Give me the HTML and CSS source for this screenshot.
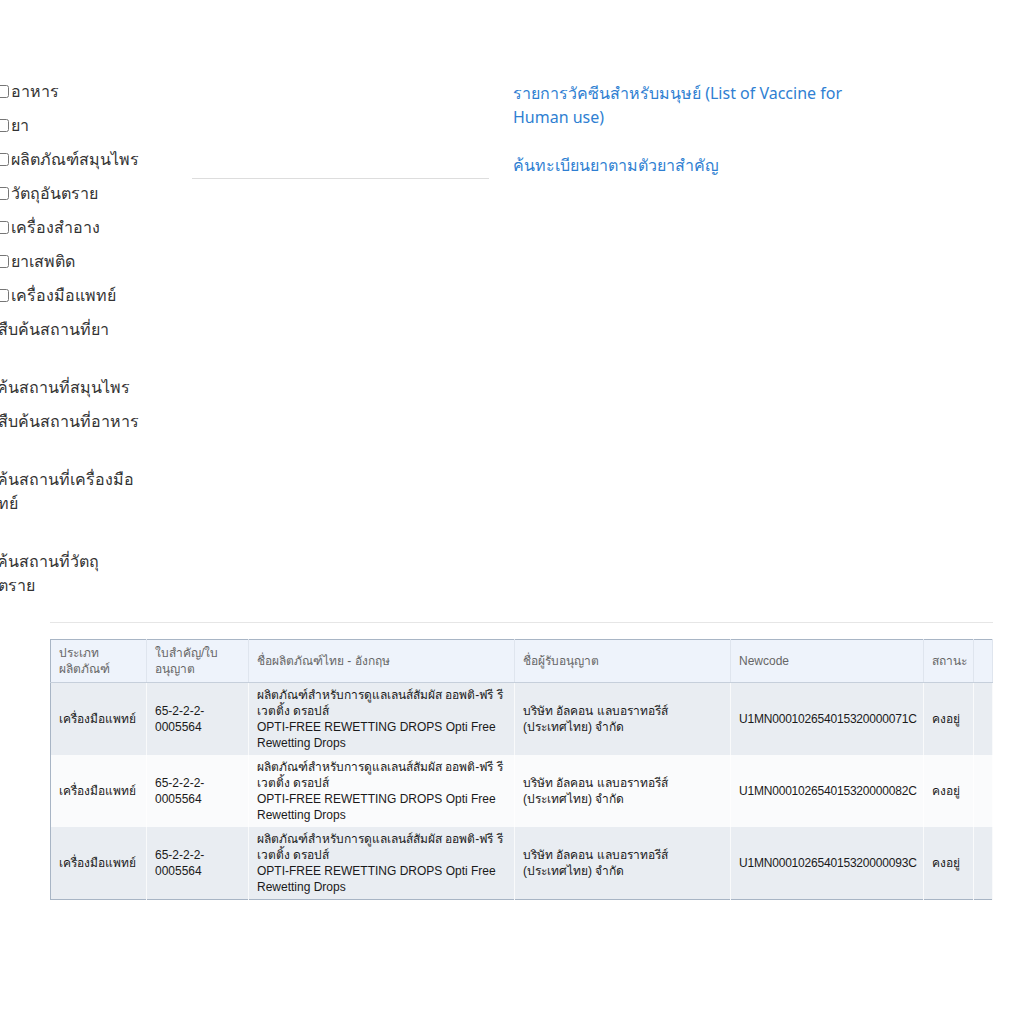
FILE: index.html
```html
<!DOCTYPE html>
<html>
<head>
<meta charset="utf-8">
<title>ค้นหาข้อมูลผลิตภัณฑ์</title>
<link rel="stylesheet" href="styles.css">
</head>
<body>
<div id="top">
	<div id="menu">
		<label class="item"><input type="checkbox">อาหาร</label>
		<label class="item"><input type="checkbox">ยา</label>
		<label class="item"><input type="checkbox">ผลิตภัณฑ์สมุนไพร</label>
		<label class="item"><input type="checkbox">วัตถุอันตราย</label>
		<label class="item"><input type="checkbox">เครื่องสำอาง</label>
		<label class="item"><input type="checkbox">ยาเสพติด</label>
		<label class="item"><input type="checkbox">เครื่องมือแพทย์</label>
		<div class="item place">สืบค้นสถานที่ยา</div>
		<div class="item place shift">สืบค้นสถานที่สมุนไพร</div>
		<div class="item place">สืบค้นสถานที่อาหาร</div>
		<div class="item place shift">สืบค้นสถานที่เครื่องมือแพทย์</div>
		<div class="item place shift">สืบค้นสถานที่วัตถุอันตราย</div>
	</div>
	<div id="middle">
		<hr>
	</div>
	<div id="links">
		<a href="#">รายการวัคซีนสำหรับมนุษย์ (List of Vaccine for Human use)</a>
		<a href="#">ค้นทะเบียนยาตามตัวยาสำคัญ</a>
	</div>
</div>

<div id="result">
	<hr>
	<table>
		<colgroup>
			<col class="c-type">
			<col class="c-reg">
			<col class="c-name">
			<col class="c-owner">
			<col class="c-code">
			<col class="c-status">
			<col>
		</colgroup>
		<thead>
			<tr>
				<th>ประเภทผลิตภัณฑ์</th>
				<th>ใบสำคัญ/ใบอนุญาต</th>
				<th>ชื่อผลิตภัณฑ์ไทย - อังกฤษ</th>
				<th>ชื่อผู้รับอนุญาต</th>
				<th>Newcode</th>
				<th>สถานะ</th>
				<th></th>
			</tr>
		</thead>
		<tbody>
			<tr>
				<td>เครื่องมือแพทย์</td>
				<td>65-2-2-2-0005564</td>
				<td>ผลิตภัณฑ์สำหรับการดูแลเลนส์สัมผัส ออพติ-ฟรี รีเวตติ้ง ดรอปส์<br>OPTI-FREE REWETTING DROPS Opti Free Rewetting Drops</td>
				<td>บริษัท อัลคอน แลบอราทอรีส์ (ประเทศไทย) จำกัด</td>
				<td class="code">U1MN000102654015320000071C</td>
				<td>คงอยู่</td>
				<td></td>
			</tr>
			<tr>
				<td>เครื่องมือแพทย์</td>
				<td>65-2-2-2-0005564</td>
				<td>ผลิตภัณฑ์สำหรับการดูแลเลนส์สัมผัส ออพติ-ฟรี รีเวตติ้ง ดรอปส์<br>OPTI-FREE REWETTING DROPS Opti Free Rewetting Drops</td>
				<td>บริษัท อัลคอน แลบอราทอรีส์ (ประเทศไทย) จำกัด</td>
				<td class="code">U1MN000102654015320000082C</td>
				<td>คงอยู่</td>
				<td></td>
			</tr>
			<tr>
				<td>เครื่องมือแพทย์</td>
				<td>65-2-2-2-0005564</td>
				<td>ผลิตภัณฑ์สำหรับการดูแลเลนส์สัมผัส ออพติ-ฟรี รีเวตติ้ง ดรอปส์<br>OPTI-FREE REWETTING DROPS Opti Free Rewetting Drops</td>
				<td>บริษัท อัลคอน แลบอราทอรีส์ (ประเทศไทย) จำกัด</td>
				<td class="code">U1MN000102654015320000093C</td>
				<td>คงอยู่</td>
				<td></td>
			</tr>
		</tbody>
	</table>
</div>
</body>
</html>
```

FILE: styles.css
```css
html, body {
	margin: 0;
	background: white;
	color: #333;
	font-family: "Noto Sans", "DejaVu Sans", sans-serif;
	font-size: 16px;
}
#top {
	display: flex;
	padding-top: 79px;
}
#menu {
	flex: 0 0 184px;
	margin-left: -4px;
	box-sizing: border-box;
	padding-right: 40px;
}
.item {
	display: block;
	line-height: 24px;
	margin-bottom: 10px;
}
.item input {
	width: 13px;
	height: 13px;
	margin: 0 2px 0 0;
	vertical-align: -1px;
}
.place {
	margin-left: 2px;
}
.shift {
	margin-top: 34px;
	margin-left: -19px;
}
#middle {
	flex: 0 0 297px;
	padding: 0 12px;
}
#middle hr {
	border: 0;
	border-top: 1px solid #ddd;
	margin: 99px 0 0;
}
#links {
	flex: 0 0 330px;
	padding: 2px 12px 0;
}
#links a {
	display: block;
	color: #2f7fd2;
	text-decoration: none;
	line-height: 24px;
	margin-bottom: 24px;
}
#result {
	padding: 0 18px 0 50px;
}
#result hr {
	border: 0;
	border-top: 1px solid #e6e6e6;
	margin: 15px 0 16px;
}
table {
	width: 100%;
	table-layout: fixed;
	border-collapse: collapse;
	border: 1px solid #a8b5c5;
	font-family: "Liberation Sans", "Noto Sans", sans-serif;
	font-size: 12px;
	line-height: 16px;
}
.c-type { width: 96px; }
.c-reg { width: 102px; }
.c-name { width: 266px; }
.c-owner { width: 216px; }
.c-code { width: 193px; }
.c-status { width: 50px; }
th {
	background: #eef3fb;
	color: #666;
	font-weight: normal;
	text-align: left;
	height: 42px;
	padding: 0 8px;
	border-right: 1px solid #dfe5ee;
	border-bottom: 1px solid #c6cfdb;
}
td {
	color: #1a1a1a;
	height: 72px;
	padding: 0 8px;
	border-right: 1px solid rgba(255, 255, 255, 0.7);
	vertical-align: middle;
}
td.code {
	letter-spacing: -0.2px;
}
tbody tr:nth-child(odd) {
	background: #e9edf2;
}
tbody tr:nth-child(even) {
	background: #fafbfc;
}
```
